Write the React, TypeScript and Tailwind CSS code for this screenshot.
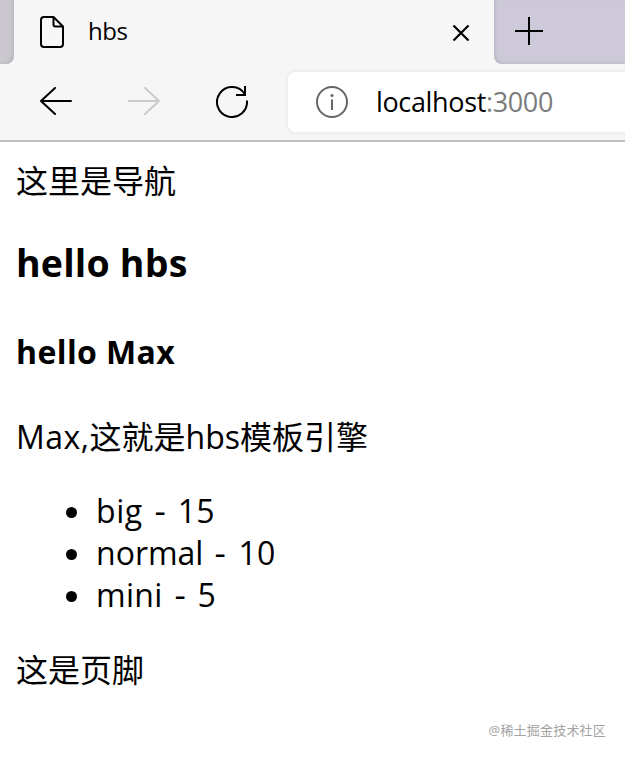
const items = [
  { name: 'big', count: 15, spacing: 'tracking-[0.6px]' },
  { name: 'normal', count: 10, spacing: 'tracking-normal' },
  { name: 'mini', count: 5, spacing: 'tracking-[0.3px]' },
];

function TabStrip() {
  return (
    <div className="flex h-16 bg-[#f7f7f7]">
      <div className="w-3.5 rounded-br-lg bg-[#cbc9cf] shadow-[inset_-3px_-2px_4px_-2px_#b5b3b9]" />
      <div className="flex w-[480px] items-center rounded-t-lg bg-[#f7f7f7] pl-[26px] pr-6">
        <svg className="h-8 w-6" viewBox="0 0 24 32" fill="none" stroke="#000" strokeWidth="2" strokeLinejoin="round">
          <path d="M4 1H13.500L23 10.500V28a3 3 0 0 1-3 3H4a3 3 0 0 1-3-3V4a3 3 0 0 1 3-3Z" />
          <path d="M13.500 1V8.500a2 2 0 0 0 2 2H23" />
        </svg>
        <span className="ml-6 -mt-0.5 text-2xl tracking-[-0.5px]">hbs</span>
        <svg className="ml-auto h-[18px] w-[18px] translate-y-px" viewBox="0 0 18 18" fill="none" stroke="#000" strokeWidth="2.2">
          <path d="M1.500 1.500l15 15M16.500 1.500l-15 15" />
        </svg>
      </div>
      <div className="flex flex-1 rounded-bl-lg bg-[#cdc9d8] pl-[21px] pt-[17px] shadow-[inset_3px_-2px_4px_-2px_#b7b4c0]">
        <svg className="h-7 w-7" viewBox="0 0 28 28" fill="none" stroke="#000" strokeWidth="2">
          <path d="M14 0v28M0 14h28" />
        </svg>
      </div>
    </div>
  );
}

function Toolbar() {
  return (
    <div className="flex h-[78px] border-b-2 border-[#bdbdbd] bg-[#f6f6f6]">
      <div className="flex h-[74px] w-[288px] items-center pl-10">
        <svg className="h-7 w-8" viewBox="0 0 32 28" fill="none" stroke="#000" strokeWidth="2" strokeLinecap="round" strokeLinejoin="round">
          <path d="M31 14H1M15 1L1 14l14 13" />
        </svg>
        <svg className="ml-14 h-7 w-8" viewBox="0 0 32 28" fill="none" stroke="#cbcbcb" strokeWidth="2" strokeLinecap="round" strokeLinejoin="round">
          <path d="M1 14h30M17 1l14 13-14 13" />
        </svg>
        <svg className="ml-14 h-8 w-8 translate-y-px" viewBox="0 0 32 32" fill="none" stroke="#000" strokeWidth="2">
          <path d="M30.930 14.500A15 15 0 1 1 28.700 8" />
          <path d="M29 0v9h-9" />
        </svg>
      </div>
      <div className="mt-2 flex h-[60px] flex-1 items-center rounded-l-lg bg-white pl-7 shadow-[0_0_0_3px_#f0f0f0]">
        <svg className="h-8 w-8" viewBox="0 0 32 32" fill="none" stroke="#666" strokeWidth="2">
          <circle cx="16" cy="16" r="15" />
          <path d="M16 13.500V24" />
          <circle cx="16" cy="9.500" r="1.500" fill="#666" stroke="none" />
        </svg>
        <span className="ml-7 text-[27px] tracking-[-0.35px]">
          localhost<span className="text-[#7b7b7b]">:3000</span>
        </span>
      </div>
    </div>
  );
}

export default function App() {
  return (
    <div className="flex h-[758px] w-[625px] flex-col overflow-hidden bg-white font-['Open_Sans','Noto_Sans_CJK_SC',sans-serif] text-black">
      <TabStrip />
      <Toolbar />
      <main className="flex flex-1 flex-col px-4 pt-[18px] text-[32px] leading-[42px] whitespace-nowrap">
        <div>这里是导航</div>
        <h3 className="mt-9 text-[37.500px] leading-[49px] font-bold tracking-[0.2px]">hello hbs</h3>
        <h4 className="mt-11 font-bold tracking-[0.4px]">hello Max</h4>
        <p className="mt-[43px]">
          <span className="tracking-[0.5px]">Max,</span>这就是hbs模板引擎
        </p>
        <ul className="mt-8">
          {items.map((item) => (
            <li key={item.name} className="flex items-center pl-[51px]">
              <span className="mr-[19px] -ml-px mt-0.5 h-[11px] w-[11px] rounded-full bg-black" />
              <span className={item.spacing}>{item.name}</span>
              <span className="ml-3 w-[11px] scale-x-110">-</span>
              <span className="ml-3 tracking-[0.2px]">{item.count}</span>
            </li>
          ))}
        </ul>
        <footer className="mt-[33px]">这是页脚</footer>
        <div className="mt-[29px] mr-[3px] self-end text-[13px] leading-5 tracking-[0.2px] text-[#a3a3a3]">@稀土掘金技术社区</div>
      </main>
    </div>
  );
}
